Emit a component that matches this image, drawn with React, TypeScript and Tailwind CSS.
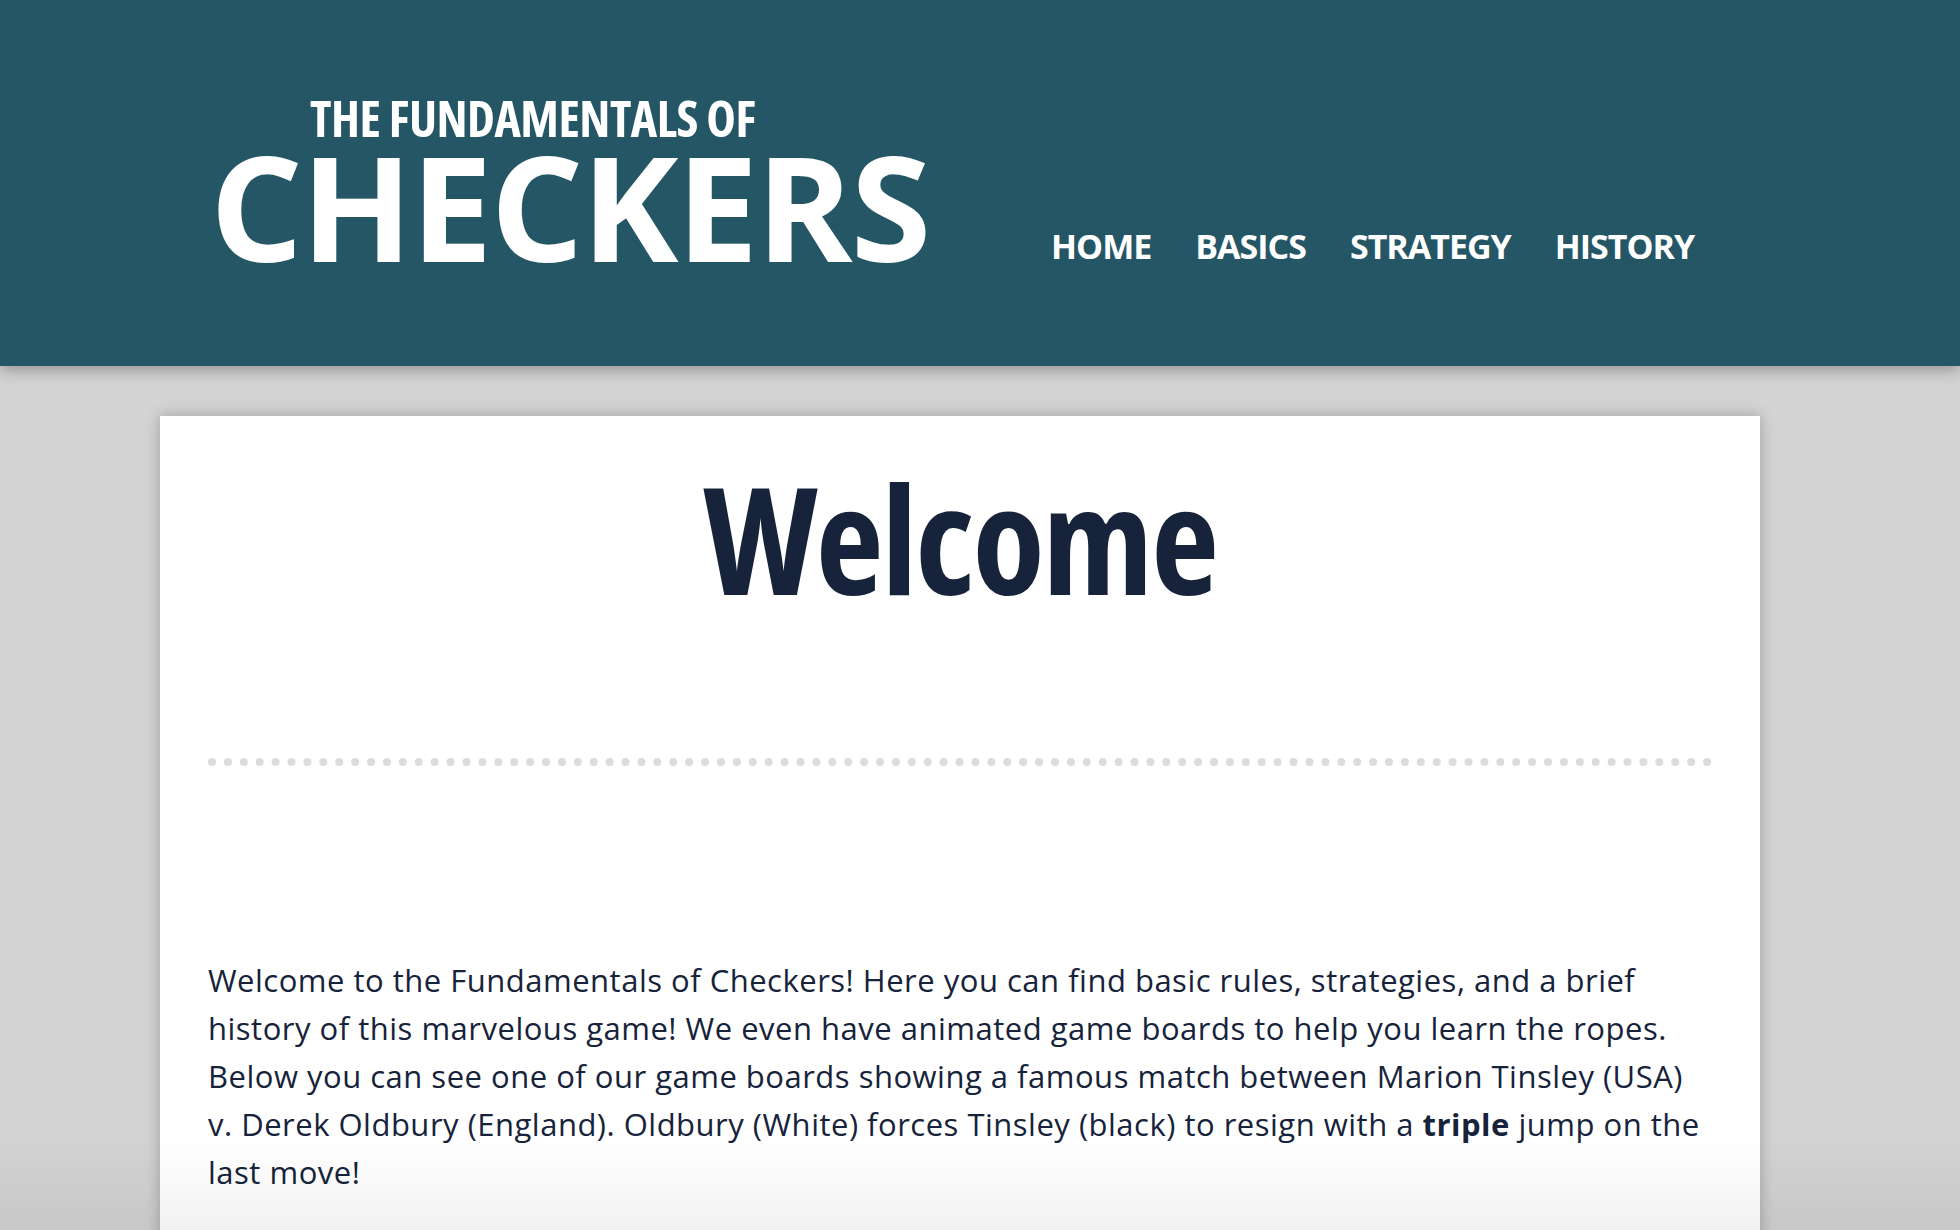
const navItems = ['HOME', 'BASICS', 'STRATEGY', 'HISTORY']

const Header = () => (
  <header className="relative z-10 h-[366px] bg-[#255666] shadow-[0_4px_14px_rgba(0,0,0,0.3)]">
    <div className="flex items-end pl-[210px] pt-[90px]">
      <div className="flex flex-col text-white">
        <span className="pl-[100px] text-[50px] leading-[56px] font-bold tracking-[-0.5px] [font-stretch:75%]">
          THE FUNDAMENTALS OF
        </span>
        <span className="text-[146px] leading-[120px] font-bold tracking-[-2px]">CHECKERS</span>
      </div>
      <nav className="ml-[122px] flex gap-[44px]">
        {navItems.map((item) => (
          <a key={item} href="#" className="text-[34px] leading-[40px] font-bold tracking-[-1px] text-white">
            {item}
          </a>
        ))}
      </nav>
    </div>
  </header>
)

export default function App() {
  return (
    <div className="min-h-[1230px] bg-[#d3d3d3] font-['Open_Sans',sans-serif] text-[#16233a]">
      <Header />
      <main className="pt-[50px] pl-[160px]">
        <section className="w-[1600px] bg-white px-[48px] pt-[32px] pb-[200px] shadow-[0_0_14px_rgba(0,0,0,0.25)]">
          <h1 className="text-center text-[148px] leading-[180px] font-bold tracking-[-2px] [font-stretch:75%]">
            Welcome
          </h1>
          <div className="mt-[130px] border-b-[8px] border-dotted border-[#dcdcdc]" />
          <p className="mt-[190px] text-[31px] leading-[48px] tracking-[0.5px]">
            Welcome to the Fundamentals of Checkers! Here you can find basic rules, strategies, and a brief history of
            this marvelous game! We even have animated game boards to help you learn the ropes. Below you can see one
            of our game boards showing a famous match between Marion Tinsley (USA) v. Derek Oldbury (England). Oldbury
            (White) forces Tinsley (black) to resign with a <strong className="font-bold">triple</strong> jump on the
            last move!
          </p>
        </section>
      </main>
      <div className="pointer-events-none fixed inset-x-0 bottom-0 h-[90px] bg-gradient-to-b from-transparent to-[rgba(0,0,0,0.05)]" />
    </div>
  )
}
